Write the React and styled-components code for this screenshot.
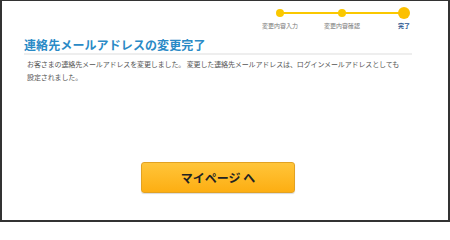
import styled, { createGlobalStyle } from "styled-components"

const GlobalStyle = createGlobalStyle`
  html, body {
    margin: 0;
    padding: 0;
    background: #fff;
  }
  * {
    box-sizing: border-box;
  }
`

const steps = [
  { label: "変更内容入力", current: false },
  { label: "変更内容確認", current: false },
  { label: "完了", current: true },
]

export default function App() {
  return (
    <>
      <GlobalStyle />
      <Frame>
        <StepBar>
          {steps.map((step, i) => (
            <Step key={step.label} $first={i === 0}>
              <DotWrap>
                <Dot $current={step.current} />
              </DotWrap>
              <StepLabel $current={step.current}>{step.label}</StepLabel>
            </Step>
          ))}
        </StepBar>
        <Content>
          <Title>連絡先メールアドレスの変更完了</Title>
          <Message>
            お客さまの連絡先メールアドレスを変更しました。 変更した連絡先メールアドレスは、ログインメールアドレスとしても
            <br />
            設定されました。
          </Message>
          <ButtonRow>
            <MyPageButton type="button">マイページ へ</MyPageButton>
          </ButtonRow>
        </Content>
      </Frame>
    </>
  )
}

const Frame = styled.div`
  width: 450px;
  height: 222px;
  border: 2px solid #333;
  border-top-width: 1px;
  background: #fff;
  font-family: "Noto Sans CJK JP", "Noto Sans", sans-serif;
  overflow: hidden;
`
const StepBar = styled.div`
  display: flex;
  justify-content: flex-end;
  padding: 5px 13px 0 0;
`
const Step = styled.div`
  position: relative;
  width: 62px;
  display: flex;
  flex-direction: column;
  align-items: center;

  /* connector to the previous step */
  &::before {
    content: "";
    display: ${(p) => (p.$first ? "none" : "block")};
    position: absolute;
    top: 6px;
    left: -31px;
    width: 62px;
    height: 2px;
    background: #fac800;
  }
`
const DotWrap = styled.div`
  position: relative;
  z-index: 1;
  height: 14px;
  display: flex;
  align-items: center;
  justify-content: center;
`
const Dot = styled.span`
  width: ${(p) => (p.$current ? "12px" : "8px")};
  height: ${(p) => (p.$current ? "12px" : "8px")};
  border-radius: 50%;
  background: ${(p) => (p.$current ? "#fcc000" : "#fac800")};
`
const StepLabel = styled.span`
  margin-top: 2px;
  font-size: 6px;
  line-height: 8px;
  color: ${(p) => (p.$current ? "#2a5590" : "#777")};
  font-weight: ${(p) => (p.$current ? 700 : 400)};
  white-space: nowrap;
`
const Content = styled.div`
  padding: 8px 36px 0 22px;
`
const Title = styled.h1`
  margin: 0;
  padding: 0 0 1px 0;
  font-size: 12px;
  line-height: 14px;
  font-weight: 700;
  letter-spacing: 0.1px;
  color: #2a8ac6;
  border-bottom: 2px solid #eeeeee;
`
const Message = styled.p`
  margin: 3px 0 0 3px;
  font-size: 7px;
  line-height: 13px;
  letter-spacing: -0.12px;
  color: #555;
  white-space: nowrap;
`
const ButtonRow = styled.div`
  display: flex;
  justify-content: center;
  margin-top: 78px;
`
const MyPageButton = styled.button`
  width: 154px;
  height: 31px;
  border: 1px solid #e2a222;
  border-radius: 3px;
  background: linear-gradient(#ffc53a, #fdae12);
  box-shadow: 0 1px 1px rgba(0, 0, 0, 0.15);
  font-family: "Noto Sans CJK JP", "Noto Sans", sans-serif;
  font-size: 12px;
  font-weight: 700;
  color: #222;
  cursor: pointer;
`
